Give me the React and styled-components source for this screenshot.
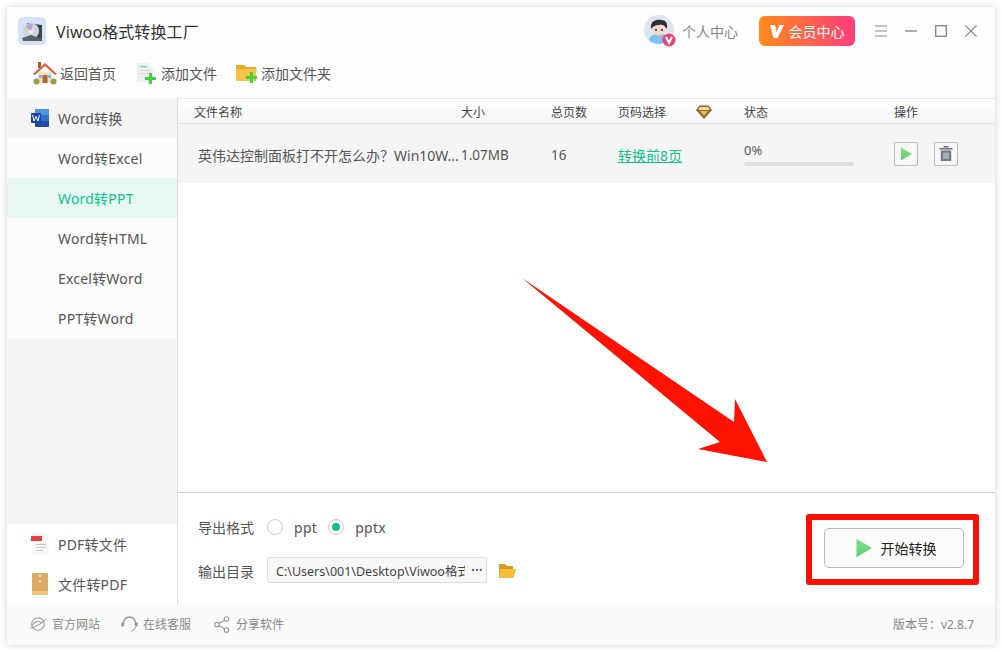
import React from "react";
import styled, { createGlobalStyle } from "styled-components";

const GlobalStyle = createGlobalStyle`
  html, body {
    margin: 0;
    padding: 0;
    background: #fff;
  }
  * {
    box-sizing: border-box;
  }
`;

const Page = styled.div`
  position: relative;
  width: 1002px;
  height: 652px;
  padding: 7px;
  overflow: hidden;
  font-family: "Noto Sans", "Noto Sans CJK SC", sans-serif;
  color: #555;
`;

const Window = styled.div`
  width: 988px;
  height: 638px;
  display: flex;
  flex-direction: column;
  background: #fff;
  box-shadow: 0 0 7px rgba(0, 0, 0, 0.18);
`;

const Header = styled.header`
  height: 91px;
  flex: none;
  background: #fdfdfd;
`;

const TitleRow = styled.div`
  height: 48px;
  display: flex;
  align-items: center;
  padding: 0 18px 0 11px;
`;

const AppName = styled.h1`
  margin: 0 0 0 10px;
  font-size: 16px;
  font-weight: 400;
  letter-spacing: 0.1px;
  color: #333;
  flex: 1;
`;

const UserLink = styled.span`
  margin-left: 6px;
  font-size: 14px;
  color: #888;
`;

const VipButton = styled.button`
  width: 96px;
  height: 30px;
  margin-left: 21px;
  border: 0;
  border-radius: 6px;
  display: flex;
  align-items: center;
  justify-content: center;
  gap: 5px;
  color: #fff;
  font: inherit;
  font-size: 14px;
  background: linear-gradient(90deg, #ff8c1c, #ff3c7c);
`;

const WindowControls = styled.div`
  display: flex;
  margin-left: 20px;
  gap: 18px;
`;

const Toolbar = styled.nav`
  height: 43px;
  display: flex;
  align-items: flex-start;
  padding: 5px 0 0 26px;
`;

const ToolButton = styled.div`
  display: flex;
  align-items: center;
  height: 26px;
  margin-right: ${(p) => p.$gap}px;
  font-size: 14px;
  color: #555;
  svg {
    margin-right: ${(p) => p.$iconGap}px;
  }
`;

const Body = styled.div`
  flex: 1;
  min-height: 0;
  display: flex;
`;

const Sidebar = styled.aside`
  width: 171px;
  flex: none;
  display: flex;
  flex-direction: column;
  background: #f4f4f4;
  border-right: 1px solid #dedede;
`;

const SideHead = styled.div`
  height: 40px;
  display: flex;
  align-items: center;
  padding-left: 24px;
  font-size: 14px;
  letter-spacing: 0.2px;
  color: #555;
  background: ${(p) => p.$bg || "#f5f5f5"};
  svg {
    flex: none;
    margin-right: 9px;
  }
`;

const SideList = styled.div`
  background: #fcfcfc;
`;

const SideItem = styled.div`
  height: 40px;
  display: flex;
  align-items: center;
  padding-left: 51px;
  font-size: 14px;
  letter-spacing: 0.2px;
  color: ${(p) => (p.$active ? "#10c08e" : "#555")};
  background: ${(p) => (p.$active ? "#e7f8f2" : "transparent")};
`;

const SideBottom = styled.div`
  margin-top: auto;
`;

const Main = styled.main`
  flex: 1;
  min-width: 0;
  display: flex;
  flex-direction: column;
`;

const columns = "267px 90px 67px 126px 150px 1fr";

const TableHead = styled.div`
  height: 26px;
  flex: none;
  display: grid;
  grid-template-columns: ${columns};
  align-items: center;
  padding: 1px 0 0 16px;
  font-size: 12px;
  color: #444;
  background: linear-gradient(#ffffff, #f7f7f7);
  border-top: 1px solid #e6e6e6;
  border-bottom: 1px solid #e2e2e2;
`;

const PageHead = styled.span`
  display: flex;
  align-items: center;
  gap: 30px;
`;

const TableRow = styled.div`
  height: 59px;
  flex: none;
  display: grid;
  grid-template-columns: ${columns};
  align-items: center;
  padding: 2px 0 0 16px;
  font-size: 13.5px;
  color: #555;
  background: #f5f5f5;
`;

const FileName = styled.span`
  padding-left: 4px;
  font-size: 14px;
  white-space: nowrap;
`;

const PageLink = styled.a`
  font-size: 14px;
  color: #10c08e;
  text-decoration: underline;
`;

const Progress = styled.div`
  display: flex;
  flex-direction: column;
  gap: 4px;
  margin-bottom: 2px;
  font-size: 13px;
  line-height: 16px;
  color: #555;
`;

const ProgressTrack = styled.div`
  width: 110px;
  height: 4px;
  border-radius: 2px;
  background: #dedede;
`;

const Actions = styled.div`
  display: flex;
  gap: 16px;
  margin-bottom: 2px;
`;

const ActionButton = styled.button`
  width: 24px;
  height: 24px;
  padding: 0;
  display: flex;
  align-items: center;
  justify-content: center;
  border: 1px solid #bbb;
  border-radius: 2px;
  background: #f8f8f8;
`;

const Spacer = styled.div`
  flex: 1;
`;

const OptionsPanel = styled.section`
  height: 112px;
  flex: none;
  display: flex;
  justify-content: space-between;
  align-items: flex-start;
  padding: 20px 31px 0 20px;
  background: #fff;
  border-top: 1px solid #d4d4d4;
`;

const OptionRows = styled.div`
  display: flex;
  flex-direction: column;
  gap: 16px;
`;

const OptionRow = styled.div`
  height: 28px;
  display: flex;
  align-items: center;
  font-size: 14px;
  color: #555;
`;

const OptionLabel = styled.span`
  width: 69px;
`;

const Radio = styled.span`
  width: 16px;
  height: 16px;
  border-radius: 50%;
  border: 1px solid #ccc;
  display: flex;
  align-items: center;
  justify-content: center;
  background: #fff;
  &::after {
    content: "";
    width: 8px;
    height: 8px;
    border-radius: 50%;
    background: ${(p) => (p.$checked ? "#10c08e" : "transparent")};
  }
`;

const RadioText = styled.span`
  margin: 0 ${(p) => p.$after}px 0 11px;
  font-size: 14px;
  letter-spacing: 0.3px;
`;

const PathBox = styled.div`
  width: 220px;
  height: 26px;
  margin: -2px 11px 0 0;
  display: flex;
  align-items: center;
  justify-content: space-between;
  padding: 0 3px 0 8px;
  border: 1px solid #dcdcdc;
  border-radius: 2px;
  background: #f8f8f8;
  font-size: 12.5px;
  color: #444;
`;

const PathText = styled.span`
  width: 189px;
  white-space: nowrap;
  overflow: hidden;
`;

const Dots = styled.span`
  font-size: 9px;
  line-height: 12px;
  letter-spacing: 0.5px;
  color: #555;
`;

const StartButton = styled.button`
  width: 140px;
  height: 40px;
  margin-top: 15px;
  padding: 0 0 0 3px;
  display: flex;
  align-items: center;
  justify-content: center;
  gap: 9px;
  border: 1px solid #b9b9b9;
  border-radius: 5px;
  background: #fbfbfb;
  font: inherit;
  font-size: 14px;
  color: #222;
`;

const Footer = styled.footer`
  height: 41px;
  flex: none;
  display: flex;
  align-items: center;
  padding: 0 21px 1px 22px;
  background: #fafafa;
  font-size: 12px;
  color: #888;
`;

const FooterLink = styled.span`
  display: flex;
  align-items: center;
  gap: ${(p) => p.$iconGap || 5}px;
  margin-right: ${(p) => p.$gap}px;
`;

const Version = styled.span`
  margin-left: auto;
`;

const Arrow = styled.svg`
  position: absolute;
  left: 0;
  top: 0;
  pointer-events: none;
`;

const Highlight = styled.div`
  position: absolute;
  left: 806px;
  top: 514px;
  width: 173px;
  height: 71px;
  border: 6px solid #ff0f00;
  border-radius: 3px;
  pointer-events: none;
`;

const Logo = () => (
  <svg width="28" height="28" viewBox="0 0 28 28">
    <rect width="28" height="28" rx="5" fill="#d3e3f6" />
    <path d="M9 6 L24 8 L24 23 L7 23 Z" fill="#3c4652" />
    <circle cx="13" cy="14" r="8" fill="#cfd3da" />
    <circle cx="13" cy="14" r="2.4" fill="#f2f2f2" />
    <path d="M8 10 A7 7 0 0 1 15 7 L13 14 Z" fill="#b9a7cf" />
    <path d="M4 21 L13 18 L24 22 L24 24 L5 24 Z" fill="#59616b" />
  </svg>
);

const HouseIcon = () => (
  <svg width="24" height="24" viewBox="0 0 24 24">
    <rect x="5" y="1" width="3" height="6" fill="#b8502e" />
    <rect x="5" y="11" width="14" height="11" fill="#f5e3c4" />
    <path d="M0 13 L12 2 L24 13 L22 14 L12 5 L2 14 Z" fill="#d9603a" />
    <rect x="9.5" y="14" width="5" height="8" fill="#b06a35" />
    <rect x="6" y="14" width="3" height="3" fill="#7fb6de" />
    <rect x="15" y="14" width="3" height="3" fill="#7fb6de" />
    <circle cx="3.5" cy="20.5" r="3" fill="#8fa04a" />
    <circle cx="20.5" cy="20.5" r="3" fill="#8fa04a" />
  </svg>
);

const AddFileIcon = () => (
  <svg width="21" height="22" viewBox="0 0 21 22">
    <path d="M1 1 H12 L17 6 V20 H1 Z" fill="#f0f0f0" />
    <rect x="4" y="4" width="7" height="1.2" fill="#5fd8c0" />
    <rect x="4" y="8" width="10" height="1" fill="#d6d6d6" />
    <rect x="4" y="11" width="8" height="1" fill="#d6d6d6" />
    <path d="M9 15 H13 V11 H16 V15 H20 V18 H16 V22 H13 V18 H9 Z" fill="#3fd43f" />
  </svg>
);

const AddFolderIcon = () => (
  <svg width="22" height="22" viewBox="0 0 22 22">
    <path d="M0 3 H8 L10 5 H20 V19 H0 Z" fill="#e3a82c" />
    <path d="M0 7 H21 L19 19 H0 Z" fill="#f7c544" />
    <path d="M10 14 H14 V10 H17 V14 H21 V17 H17 V21 H14 V17 H10 Z" fill="#3fd43f" />
  </svg>
);

const Avatar = () => (
  <svg width="32" height="32" viewBox="0 0 32 32">
    <circle cx="15" cy="15" r="15" fill="#dfe5ec" />
    <path d="M5 25 C6 20 10 19 15 19 C20 19 24 20 25 25 A15 15 0 0 1 5 25 Z" fill="#7fc0ea" />
    <ellipse cx="15" cy="14" rx="7" ry="6.5" fill="#f6d9c6" />
    <path d="M7.5 14 C5 6 13 4 17 5 C23 5 24 10 22.5 14 C21 10 18 9 15 10 C11 10 9 11 7.5 14 Z" fill="#2d2d36" />
    <circle cx="12" cy="15" r="1" fill="#222" />
    <circle cx="18" cy="15" r="1" fill="#222" />
    <circle cx="25" cy="25" r="6.5" fill="#e8447c" />
    <path d="M22 22 L25 28 L28 22" fill="none" stroke="#fff" strokeWidth="2" />
  </svg>
);

const VipMark = () => (
  <svg width="14" height="13" viewBox="0 0 14 13">
    <path d="M0 0 H5 L6.5 7 L9.5 0 H14 L7.5 13 H3.5 Z" fill="#fff" />
  </svg>
);

const MenuIcon = () => (
  <svg width="12" height="12" viewBox="0 0 12 12" stroke="#888" strokeWidth="1.2">
    <path d="M0 1 H12 M0 6 H12 M0 11 H12" />
  </svg>
);

const MinimizeIcon = () => (
  <svg width="12" height="12" viewBox="0 0 12 12" stroke="#888" strokeWidth="1.4">
    <path d="M0 6 H12" />
  </svg>
);

const MaximizeIcon = () => (
  <svg width="12" height="12" viewBox="0 0 12 12" fill="none" stroke="#888" strokeWidth="1.4">
    <rect x="0.7" y="0.7" width="10.6" height="10.6" />
  </svg>
);

const CloseIcon = () => (
  <svg width="12" height="12" viewBox="0 0 12 12" stroke="#888" strokeWidth="1.1">
    <path d="M0.5 0.5 L11.5 11.5 M11.5 0.5 L0.5 11.5" />
  </svg>
);

const WordIcon = () => (
  <svg width="18" height="18" viewBox="0 0 18 18">
    <rect x="4" y="0" width="14" height="18" rx="1" fill="#2f6fd0" />
    <rect x="4" y="0" width="14" height="6" rx="1" fill="#4a94e8" />
    <rect x="4" y="12" width="14" height="6" rx="1" fill="#1d4ba0" />
    <rect x="0" y="4" width="10" height="10" rx="1" fill="#1c45a0" />
    <path d="M1.6 6 L3 12 L5 7.5 L7 12 L8.4 6" fill="none" stroke="#fff" strokeWidth="1" />
  </svg>
);

const PdfIcon = () => (
  <svg width="18" height="22" viewBox="0 0 18 22">
    <path d="M2 0 H13 L17 4 V21 H2 Z" fill="#f6f6f6" stroke="#e8e8e8" strokeWidth="0.5" />
    <rect x="0" y="3" width="11" height="5" fill="#e8403c" />
    <rect x="5" y="11" width="10" height="1" fill="#c9c9c9" />
    <rect x="5" y="14" width="10" height="1" fill="#c9c9c9" />
    <rect x="5" y="17" width="7" height="1" fill="#c9c9c9" />
  </svg>
);

const PackageIcon = () => (
  <svg width="18" height="22" viewBox="0 0 18 22">
    <rect x="1" y="0" width="16" height="22" fill="#dcaa63" />
    <rect x="1" y="18" width="16" height="4" fill="#efc27a" />
    <rect x="8" y="2" width="2" height="2" fill="#f4e4c4" />
    <rect x="8" y="7" width="2" height="2" fill="#f4e4c4" />
  </svg>
);

const DiamondIcon = () => (
  <svg width="16" height="14" viewBox="0 0 16 14">
    <path d="M3.5 0.5 H12.5 L16 5 L8 14 L0 5 Z" fill="#9a6324" />
    <path d="M4 2 H12 L14 5 H2 Z" fill="#f6d9a4" />
    <path d="M4 6 H12 L8 11 Z" fill="#e6b466" />
  </svg>
);

const PlayIcon = ({ size, height }) => (
  <svg width={size} height={height} viewBox="0 0 12 14">
    <defs>
      <linearGradient id="playFill" x1="0" y1="0" x2="0" y2="1">
        <stop offset="0" stopColor="#86e08a" />
        <stop offset="1" stopColor="#5fd070" />
      </linearGradient>
    </defs>
    <path d="M1 0.5 L12 7 L1 13.5 Z" fill="url(#playFill)" />
  </svg>
);

const TrashIcon = () => (
  <svg width="14" height="15" viewBox="0 0 14 15" fill="#70788a">
    <rect x="0.5" y="2" width="13" height="1.6" />
    <rect x="4.5" y="0" width="5" height="1.6" />
    <path d="M1.8 4.5 H12.2 V15 H1.8 Z" />
    <path d="M5 6.5 V13 M7 6.5 V13 M9 6.5 V13" stroke="#f5f5f5" strokeWidth="0.8" />
  </svg>
);

const FolderIcon = () => (
  <svg width="18" height="16" viewBox="0 0 18 16">
    <path d="M1 1 H7 L9 3 H15 V14 H1 Z" fill="#d99a1e" />
    <path d="M2 6 H18 L15.5 15 H1 Z" fill="#f5bd3a" />
  </svg>
);

const GlobeIcon = () => (
  <svg width="18" height="16" viewBox="0 0 18 16" fill="none" stroke="#999" strokeWidth="1.1">
    <circle cx="9" cy="8" r="6.3" />
    <path d="M0.8 12 C4 12 13 8 17 3" />
    <path d="M3 9.5 C6 5 10 5 13 6.5" />
  </svg>
);

const HeadsetIcon = () => (
  <svg width="17" height="16" viewBox="0 0 17 16" fill="none" stroke="#999" strokeWidth="1.6">
    <path d="M2.5 10 V7 A6 6 0 0 1 14.5 7 V10" />
    <path d="M1.5 6.5 V10.5 M15.5 6.5 V10.5" strokeWidth="2.4" />
    <path d="M14.5 11 C14 13.5 12 15 10 15" strokeWidth="1" />
  </svg>
);

const ShareIcon = () => (
  <svg width="16" height="17" viewBox="0 0 16 17" fill="none" stroke="#999" strokeWidth="1.1">
    <circle cx="3" cy="8.5" r="2.3" />
    <circle cx="12.5" cy="3" r="2.3" />
    <circle cx="12.5" cy="14" r="2.3" />
    <path d="M5 7.4 L10.5 4.2 M5 9.6 L10.5 12.8" />
  </svg>
);

const convertItems = ["Word转Excel", "Word转PPT", "Word转HTML", "Excel转Word", "PPT转Word"];

export default function App() {
  return (
    <>
      <GlobalStyle />
      <Page>
        <Window>
          <Header>
            <TitleRow>
              <Logo />
              <AppName>Viwoo格式转换工厂</AppName>
              <Avatar />
              <UserLink>个人中心</UserLink>
              <VipButton>
                <VipMark />
                会员中心
              </VipButton>
              <WindowControls>
                <MenuIcon />
                <MinimizeIcon />
                <MaximizeIcon />
                <CloseIcon />
              </WindowControls>
            </TitleRow>
            <Toolbar>
              <ToolButton $gap={20} $iconGap={3}>
                <HouseIcon />
                返回首页
              </ToolButton>
              <ToolButton $gap={19} $iconGap={4}>
                <AddFileIcon />
                添加文件
              </ToolButton>
              <ToolButton $iconGap={3}>
                <AddFolderIcon />
                添加文件夹
              </ToolButton>
            </Toolbar>
          </Header>
          <Body>
            <Sidebar>
              <SideHead>
                <WordIcon />
                Word转换
              </SideHead>
              <SideList>
                {convertItems.map((item) => (
                  <SideItem key={item} $active={item === "Word转PPT"}>
                    {item}
                  </SideItem>
                ))}
              </SideList>
              <SideBottom>
                <SideHead $bg="#fff">
                  <PdfIcon />
                  PDF转文件
                </SideHead>
                <SideHead $bg="#fff">
                  <PackageIcon />
                  文件转PDF
                </SideHead>
              </SideBottom>
            </Sidebar>
            <Main>
              <TableHead>
                <span>文件名称</span>
                <span>大小</span>
                <span>总页数</span>
                <PageHead>
                  页码选择
                  <DiamondIcon />
                </PageHead>
                <span>状态</span>
                <span>操作</span>
              </TableHead>
              <TableRow>
                <FileName>英伟达控制面板打不开怎么办？Win10W...</FileName>
                <span>1.07MB</span>
                <span>16</span>
                <span>
                  <PageLink>转换前8页</PageLink>
                </span>
                <Progress>
                  0%
                  <ProgressTrack />
                </Progress>
                <Actions>
                  <ActionButton>
                    <PlayIcon size={12} height={14} />
                  </ActionButton>
                  <ActionButton>
                    <TrashIcon />
                  </ActionButton>
                </Actions>
              </TableRow>
              <Spacer />
              <OptionsPanel>
                <OptionRows>
                  <OptionRow>
                    <OptionLabel>导出格式</OptionLabel>
                    <Radio />
                    <RadioText $after={11}>ppt</RadioText>
                    <Radio $checked />
                    <RadioText $after={0}>pptx</RadioText>
                  </OptionRow>
                  <OptionRow>
                    <OptionLabel>输出目录</OptionLabel>
                    <PathBox>
                      <PathText>C:\Users\001\Desktop\Viwoo格式转换工厂</PathText>
                      <Dots>•••</Dots>
                    </PathBox>
                    <FolderIcon />
                  </OptionRow>
                </OptionRows>
                <StartButton>
                  <PlayIcon size={17} height={20} />
                  开始转换
                </StartButton>
              </OptionsPanel>
            </Main>
          </Body>
          <Footer>
            <FooterLink $gap={21}>
              <GlobeIcon />
              官方网站
            </FooterLink>
            <FooterLink $gap={23}>
              <HeadsetIcon />
              在线客服
            </FooterLink>
            <FooterLink $iconGap={6}>
              <ShareIcon />
              分享软件
            </FooterLink>
            <Version>版本号：v2.8.7</Version>
          </Footer>
        </Window>
        <Arrow width="1002" height="652" viewBox="0 0 1002 652">
          <polygon points="522,278 734,422 735,399 767,462 698,449 720,442" fill="#ff1200" />
        </Arrow>
        <Highlight />
      </Page>
    </>
  );
}
